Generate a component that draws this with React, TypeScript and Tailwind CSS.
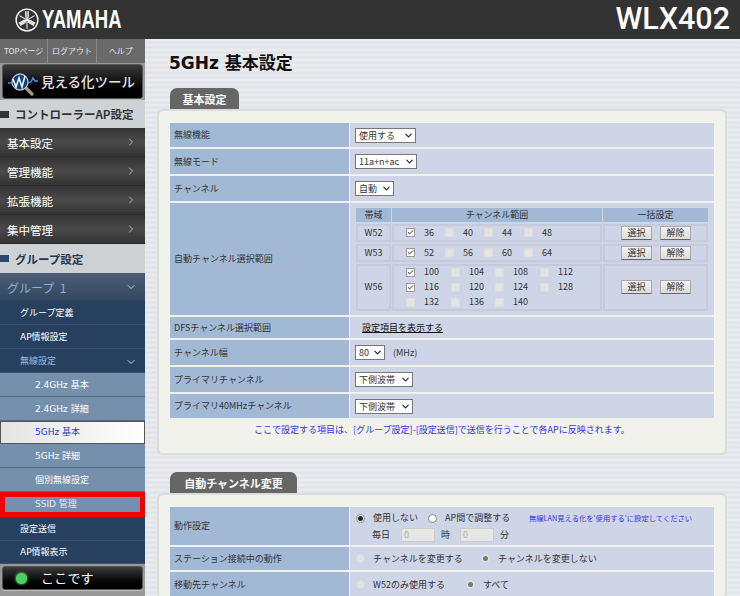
import { Check as CheckMark, ChevronDown, ChevronRight } from "lucide-react";

const settingMenus = ["基本設定", "管理機能", "拡張機能", "集中管理"];

const groupRows = [
  { label: "グループ定義", kind: "navy", h: "h-[24px]" },
  { label: "AP情報設定", kind: "navy", h: "h-[24px]" },
  { label: "無線設定", kind: "navyOpen", h: "h-[24px]" },
  { label: "2.4GHz 基本", kind: "sub", h: "h-[24px]" },
  { label: "2.4GHz 詳細", kind: "sub", h: "h-[24px]" },
  { label: "5GHz 基本", kind: "active", h: "h-[23px]" },
  { label: "5GHz 詳細", kind: "sub", h: "h-[24px]" },
  { label: "個別無線設定", kind: "sub", h: "h-[24px]" },
  { label: "SSID 管理", kind: "marked", h: "h-[25px]" },
  { label: "設定送信", kind: "navy", h: "h-[24px]" },
  { label: "AP情報表示", kind: "navy", h: "h-[23px]" },
];

const forkPath = "M10.7 3.2v5.6a1.3 1.3 0 0 0 2.6 0V3.2M12 3.4V20.8";

function YamahaMark() {
  return (
    <svg viewBox="0 0 24 24" className="h-[24px] w-[24px] shrink-0" fill="none" stroke="white">
      <circle cx="12" cy="12" r="10.9" strokeWidth="1.4" />
      <g strokeWidth="1">
        <path d={forkPath} />
        <path d={forkPath} transform="rotate(120 12 12)" />
        <path d={forkPath} transform="rotate(240 12 12)" />
      </g>
    </svg>
  );
}

function ScopeIcon() {
  return (
    <svg viewBox="0 0 32 28" className="h-[28px] w-[32px] shrink-0">
      <path d="M19 20l6 6" stroke="#a89878" strokeWidth="3.2" strokeLinecap="round" />
      <circle cx="13" cy="14" r="8" fill="#123f7c" stroke="#b4c4d4" strokeWidth="1.3" />
      <path d="M1 15h5" stroke="#4f94e0" strokeWidth="1.4" />
      <path d="M21 15l3-1 2-4 2 3h3" fill="none" stroke="#4f94e0" strokeWidth="1.4" />
      <path d="M6 11l3 8 3-9 3 9 3-11" fill="none" stroke="#e8f4ff" strokeWidth="1.6" />
    </svg>
  );
}

function BlackButton({ children }: { children: React.ReactNode }) {
  return (
    <div className="flex items-center rounded-[3px] border border-[#555] bg-gradient-to-b from-[#3c3c3c] via-[#111] to-black text-white shadow-[0_1px_0_#bbb]">
      {children}
    </div>
  );
}

function SectionHead({ label, color, h }: { label: string; color: string; h: string }) {
  return (
    <div className={`flex ${h} items-center gap-[6px] bg-[#cfd2d5] text-[11.5px] font-bold`}>
      <span className={color === "navy" ? "h-[7px] w-[9px] bg-[#2b4a70]" : "h-[7px] w-[9px] bg-[#333]"} />
      <span className={color === "navy" ? "pt-[2px] text-[#1f3654]" : "pt-[2px] text-[#333]"}>{label}</span>
    </div>
  );
}

function GroupRow({ label, kind, h }: { label: string; kind: string; h: string }) {
  if (kind === "active") {
    return (
      <div className={`${h} flex items-center border border-[#555] bg-gradient-to-r from-[#e4e4e2] to-white pl-[34px] text-[9px] text-[#2340c0]`}>
        {label}
      </div>
    );
  }
  if (kind === "marked") {
    return (
      <div className={`${h} flex items-center border-[5px] border-[#f40000] bg-[#7490ad] pl-[30px] text-[9px] text-[#e6edf5]`}>
        {label}
      </div>
    );
  }
  if (kind === "sub") {
    return (
      <div className={`${h} flex items-center border-b border-[#56687e] bg-[#7490ad] pl-[35px] pt-[2px] text-[9px] text-white`}>
        {label}
      </div>
    );
  }
  return (
    <div className={`${h} flex items-center justify-between border-b border-[#3b526e] bg-[#27405f] pl-[20px] pr-[8px] pt-[2px] text-[9px] ${kind === "navyOpen" ? "text-[#9dbbdc]" : "text-white"}`}>
      {label}
      {kind === "navyOpen" && <ChevronDown size={12} className="text-[#c6d0da]" />}
    </div>
  );
}

function Sidebar() {
  return (
    <aside className="flex w-[145px] shrink-0 flex-col bg-[#27405f]">
      <div className="grid h-[24px] grid-cols-3 bg-[#6a6a6a] text-center text-[8px] leading-[24px] text-[#e8e8ee]">
        <span className="border-r border-[#8a8a8a]">TOPページ</span>
        <span className="border-r border-[#8a8a8a]">ログアウト</span>
        <span>ヘルプ</span>
      </div>
      <div className="h-[37px] bg-[#999] px-[2px] pt-[1px]">
        <BlackButton>
          <div className="flex h-[33px] items-center gap-[2px] pl-[4px] text-[13.5px] font-medium text-[#e4e4e4]">
            <ScopeIcon />
            見える化ツール
          </div>
        </BlackButton>
      </div>
      <SectionHead label="コントローラーAP設定" color="gray" h="h-[28px]" />
      {settingMenus.map((menu) => (
        <div
          key={menu}
          className="flex h-[29px] items-center justify-between border-b border-[#2a2a2a] bg-gradient-to-b from-[#343434] via-[#4a4a4a] to-[#333] pl-[7px] pr-[8px] text-[11.5px] text-white"
        >
          <span className="pt-[3px]">{menu}</span>
          <ChevronRight size={12} className="text-[#bbb]" />
        </div>
      ))}
      <SectionHead label="グループ設定" color="navy" h="h-[29px]" />
      <div className="flex h-[28px] items-center justify-between bg-gradient-to-b from-[#4d5f78] to-[#33475f] pl-[7px] pr-[8px] text-[12px] text-[#88aedb]">
        <span className="pt-[1px]">グループ&nbsp;&nbsp;1</span>
        <ChevronDown size={12} className="text-[#c6d0da]" />
      </div>
      <div className="font-['DejaVu_Sans','Noto_Sans_CJK_JP',sans-serif]">
        {groupRows.map((row) => (
          <GroupRow key={row.label} {...row} />
        ))}
      </div>
      <div className="flex-1 bg-[#999] px-[2px] pt-[2px]">
        <BlackButton>
          <div className="flex h-[22px] items-center pl-[13px] text-[13px]">
            <span className="h-[11px] w-[11px] rounded-full bg-[#45d460] shadow-[0_0_3px_#7dff90]" />
            <span className="ml-[14px] tracking-[0.2px]">ここです</span>
          </div>
        </BlackButton>
      </div>
    </aside>
  );
}

function Row({ label, h, children, last }: { label: string; h: string; children: React.ReactNode; last?: boolean }) {
  return (
    <div className={`flex ${h} ${last ? "" : "mb-[2px]"} gap-[1px]`}>
      <div className="flex w-[179px] shrink-0 items-center bg-[#a2b9d5] pl-[4px]">{label}</div>
      <div className="flex min-w-0 flex-1 items-center bg-[#ced5e6] pl-[5px]">{children}</div>
    </div>
  );
}

function Pick({ value, w }: { value: string; w: string }) {
  return (
    <span className={`relative block ${w} h-[15px]`}>
      <select
        defaultValue={value}
        className="block h-full w-full appearance-none rounded-none border border-[#777] bg-white pl-[3px] text-[9px] text-[#333]"
      >
        <option>{value}</option>
      </select>
      <ChevronDown size={11} strokeWidth={2.4} className="pointer-events-none absolute right-[2px] top-[2px] text-[#222]" />
    </span>
  );
}

function Check({ n, on, w }: { n?: string; on?: boolean; w: string }) {
  return (
    <span className={`flex ${w} items-center`}>
      {on ? (
        <span className="flex h-[9px] w-[9px] shrink-0 items-center justify-center border border-[#999] bg-white">
          <CheckMark size={9} strokeWidth={3} className="text-[#111]" />
        </span>
      ) : (
        <span className="h-[9px] w-[9px] shrink-0 border border-[#ddd] bg-[#e3e3e3]" />
      )}
      <span className="ml-[9px]">{n}</span>
    </span>
  );
}

function BulkButton({ label }: { label: string }) {
  return (
    <span className="flex h-[14px] w-[31px] items-center justify-center border border-[#aaa] border-b-[#666] bg-gradient-to-b from-[#f2f2f2] to-[#dcdcdc]">
      {label}
    </span>
  );
}

function BulkButtons() {
  return (
    <div className="flex items-center gap-[8px] pl-[16px]">
      <BulkButton label="選択" />
      <BulkButton label="解除" />
    </div>
  );
}

function Cell({ className, children }: { className: string; children: React.ReactNode }) {
  return <div className={`flex border-2 border-[#c6cbdb] ${className}`}>{children}</div>;
}

function ChannelGrid() {
  return (
    <div className="grid w-[352px] grid-cols-[35px_210px_105px] gap-x-[1px] gap-y-[2px] text-[9px] text-[#333]">
      <div className="h-[14px] bg-[#a2b9d5] text-center leading-[14px]">帯域</div>
      <div className="h-[14px] bg-[#a2b9d5] text-center leading-[14px]">チャンネル範囲</div>
      <div className="h-[14px] bg-[#a2b9d5] text-center leading-[14px]">一括設定</div>

      <Cell className="h-[18px] items-center justify-center">W52</Cell>
      <Cell className="h-[18px] items-center pl-[12px]">
        <Check n="36" on w="w-[39px]" />
        <Check n="40" w="w-[39px]" />
        <Check n="44" w="w-[40px]" />
        <Check n="48" w="w-[39px]" />
      </Cell>
      <Cell className="h-[18px] items-center"><BulkButtons /></Cell>

      <Cell className="h-[18px] items-center justify-center">W53</Cell>
      <Cell className="h-[18px] items-center pl-[12px]">
        <Check n="52" on w="w-[39px]" />
        <Check n="56" w="w-[39px]" />
        <Check n="60" w="w-[40px]" />
        <Check n="64" w="w-[39px]" />
      </Cell>
      <Cell className="h-[18px] items-center"><BulkButtons /></Cell>

      <Cell className="h-[47px] items-center justify-center">W56</Cell>
      <Cell className="h-[47px] flex-col justify-center gap-[2px] pl-[12px]">
        <div className="flex h-[13px]">
          <Check n="100" on w="w-[45px]" />
          <Check n="104" w="w-[44px]" />
          <Check n="108" w="w-[45px]" />
          <Check n="112" w="w-[44px]" />
        </div>
        <div className="flex h-[13px]">
          <Check n="116" on w="w-[45px]" />
          <Check n="120" w="w-[44px]" />
          <Check n="124" w="w-[45px]" />
          <Check n="128" w="w-[44px]" />
        </div>
        <div className="flex h-[13px]">
          <Check n="132" w="w-[45px]" />
          <Check n="136" w="w-[44px]" />
          <Check n="140" w="w-[45px]" />
        </div>
      </Cell>
      <Cell className="h-[47px] items-center"><BulkButtons /></Cell>
    </div>
  );
}

function Radio({ label, on, off, w }: { label: string; on?: boolean; off?: boolean; w: string }) {
  return (
    <span className={`flex ${w} items-center`}>
      <span
        className={`flex h-[9px] w-[9px] shrink-0 items-center justify-center rounded-full border ${
          off ? "border-[#ddd] bg-[#e3e3e3]" : "border-[#888] bg-white"
        }`}
      >
        {on && <span className={`h-[5px] w-[5px] rounded-full ${off ? "bg-[#777]" : "bg-[#222]"}`} />}
      </span>
      <span className="ml-[8px] whitespace-nowrap">{label}</span>
    </span>
  );
}

function TimeBox() {
  return (
    <input
      disabled
      defaultValue="0"
      className="h-[14px] w-[34px] border border-[#ccc] bg-[#e6e6e6] pl-[2px] text-[9px] text-[#aaa]"
    />
  );
}

function Panel({ tab, tabW, children }: { tab: string; tabW: string; children: React.ReactNode }) {
  return (
    <section className="mr-[13px] ml-[12px]">
      <div className={`ml-[13px] ${tabW} h-[21px] rounded-t-[7px] bg-[#666] text-center text-[11px] font-bold leading-[22px] text-white`}>
        {tab}
      </div>
      <div className="rounded-[6px] border-2 border-[#dcdcd8] bg-[#f2f2ec] px-[11px] pt-[12px] text-[9px] text-[#333]">
        {children}
      </div>
    </section>
  );
}

export default function App() {
  return (
    <div className="flex h-[596px] w-[740px] flex-col overflow-hidden font-['Noto_Sans_CJK_JP','Noto_Sans',sans-serif]">
      <header className="flex h-[39px] shrink-0 items-center justify-between bg-[#333] pl-[15px] pr-[10px] text-white">
        <div className="flex items-center gap-[3px]">
          <YamahaMark />
          <span className="inline-block w-[80px] origin-left scale-x-[0.74] font-['Liberation_Sans',sans-serif] text-[25px] font-bold leading-none">
            YAMAHA
          </span>
        </div>
        <span className="font-['Roboto',sans-serif] text-[30.5px] font-medium leading-none">WLX402</span>
      </header>
      <div className="flex min-h-0 flex-1">
        <Sidebar />
        <main className="min-w-0 flex-1 overflow-hidden bg-[#e4e6ea] bg-[repeating-linear-gradient(180deg,#e9ebee_0px,#e9ebee_2px,#dfe2e7_3px,#e6e8ec_5px)]">
          <h1 className="ml-[24px] mt-[12px] h-[37px] font-['DejaVu_Sans','Noto_Sans_CJK_JP',sans-serif] text-[17px] font-bold leading-[24px] text-[#111]">
            5GHz 基本設定
          </h1>
          <Panel tab="基本設定" tabW="w-[69px]">
            <Row label="無線機能" h="h-[24px]">
              <Pick value="使用する" w="w-[61px]" />
            </Row>
            <Row label="無線モード" h="h-[25px]">
              <Pick value="11a+n+ac" w="w-[62px]" />
            </Row>
            <Row label="チャンネル" h="h-[25px]">
              <Pick value="自動" w="w-[39px]" />
            </Row>
            <Row label="自動チャンネル選択範囲" h="h-[112px]">
              <div className="ml-[1px]"><ChannelGrid /></div>
            </Row>
            <Row label="DFSチャンネル選択範囲" h="h-[21px]">
              <span className="ml-[7px] text-[#111] underline">設定項目を表示する</span>
            </Row>
            <Row label="チャンネル幅" h="h-[25px]">
              <Pick value="80" w="w-[30px]" />
              <span className="ml-[8px]">(MHz)</span>
            </Row>
            <Row label="プライマリチャンネル" h="h-[25px]">
              <Pick value="下側波帯" w="w-[58px]" />
            </Row>
            <Row label="プライマリ40MHzチャンネル" h="h-[24px]" last>
              <Pick value="下側波帯" w="w-[58px]" />
            </Row>
            <p className="h-[35px] pt-[5px] text-center leading-[13px] text-[#3333ee]">
              ここで設定する項目は、[グループ設定]-[設定送信]で送信を行うことで各APに反映されます。
            </p>
          </Panel>
          <div className="h-[17px]" />
          <Panel tab="自動チャンネル変更" tabW="w-[127px]">
            <Row label="動作設定" h="h-[38px]">
              <div className="flex flex-col gap-[2px]">
                <div className="flex h-[15px] items-center pl-[1px]">
                  <Radio label="使用しない" on w="w-[72px]" />
                  <Radio label="AP間で調整する" w="w-[101px]" />
                  <span className="whitespace-nowrap text-[7.3px] text-[#3333ee]">無線LAN見える化を'使用する'に設定してください</span>
                </div>
                <div className="flex h-[14px] items-center pl-[17px]">
                  <span className="w-[29px]">毎日</span>
                  <TimeBox />
                  <span className="ml-[6px] w-[19px]">時</span>
                  <TimeBox />
                  <span className="ml-[6px]">分</span>
                </div>
              </div>
            </Row>
            <Row label="ステーション接続中の動作" h="h-[23px]">
              <span className="flex pl-[1px]">
                <Radio label="チャンネルを変更する" off w="w-[125px]" />
                <Radio label="チャンネルを変更しない" on off w="w-[120px]" />
              </span>
            </Row>
            <Row label="移動先チャンネル" h="h-[25px]" last>
              <span className="flex pl-[1px]">
                <Radio label="W52のみ使用する" off w="w-[110px]" />
                <Radio label="すべて" on off w="w-[60px]" />
              </span>
            </Row>
          </Panel>
        </main>
      </div>
    </div>
  );
}
